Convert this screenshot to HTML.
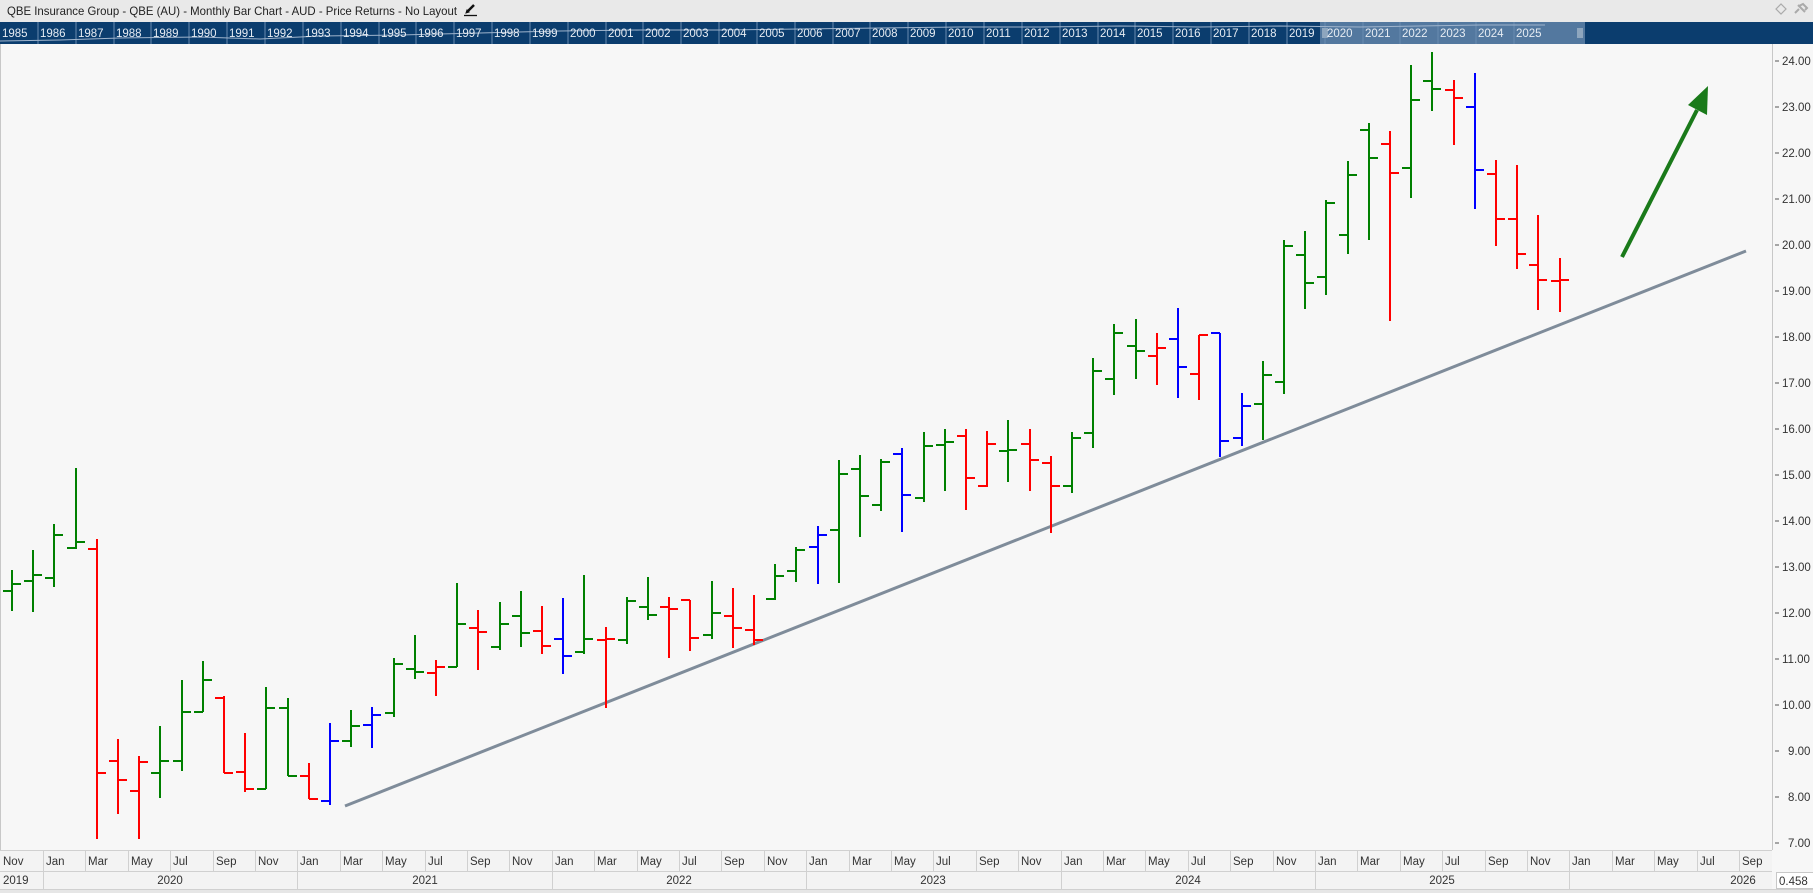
<!DOCTYPE html>
<html><head><meta charset="utf-8"><style>
html,body{margin:0;padding:0;width:1813px;height:893px;overflow:hidden;background:#f7f7f7;font-family:"Liberation Sans",sans-serif}
svg{display:block}
</style></head><body>
<svg width="1813" height="893" xmlns="http://www.w3.org/2000/svg" font-family="Liberation Sans, sans-serif">
<rect x="0" y="0" width="1813" height="893" fill="#f7f7f7"/>
<rect x="0" y="0" width="1813" height="22" fill="#e9e9e9"/>
<text x="7" y="15" font-size="12" fill="#222" textLength="450" lengthAdjust="spacingAndGlyphs">QBE Insurance Group - QBE (AU) - Monthly Bar Chart - AUD - Price Returns - No Layout</text>
<g stroke="#111" fill="none"><path d="M467 12 L474 5" stroke-width="2.5"/><path d="M464 15.5 H477" stroke-width="1.3"/><path d="M466 13 L467 10 L469 12 Z" fill="#111" stroke-width="1"/></g>
<path d="M1776 9 L1781 4 L1786 9 L1781 14 Z" fill="none" stroke="#aaa" stroke-width="1.2"/>
<path d="M1795 13 L1799 9 M1798 5 L1805 12 M1799 6 L1803 4 L1807 8 L1805 10" fill="none" stroke="#aaa" stroke-width="2"/>
<rect x="0" y="22" width="1813" height="22" fill="#0b3d6e"/>
<rect x="1320" y="22" width="265" height="22" fill="#53789f"/>
<g stroke="#6a8bb0" stroke-width="1">
<path d="M38 22V44M76 22V44M114 22V44M151 22V44M189 22V44M227 22V44M265 22V44M303 22V44M341 22V44M379 22V44M416 22V44M454 22V44M492 22V44M530 22V44M568 22V44M606 22V44M643 22V44M681 22V44M719 22V44M757 22V44M795 22V44M833 22V44M870 22V44M908 22V44M946 22V44M984 22V44M1022 22V44M1060 22V44M1098 22V44M1135 22V44M1173 22V44M1211 22V44M1249 22V44M1287 22V44M1325 22V44M1363 22V44M1400 22V44M1438 22V44M1476 22V44M1514 22V44"/>
</g>
<polyline points="0,41 60,40 120,38 200,37 260,39 320,36 400,35 480,33 560,31 640,30 720,30 800,29 880,28 960,27 1040,27 1120,26 1200,27 1280,26 1360,27 1420,26 1480,25 1545,25" fill="none" stroke="#9fb4cc" stroke-width="1"/>
<g stroke="#c9d3de" stroke-width="1"><path d="M1323 28V38M1325 28V38M1327 28V38M1578 28V38M1580 28V38M1582 28V38"/></g>
<g font-size="11.5" fill="#e6ecf3">
<text x="2" y="37">1985</text><text x="40" y="37">1986</text><text x="78" y="37">1987</text><text x="116" y="37">1988</text><text x="153" y="37">1989</text><text x="191" y="37">1990</text><text x="229" y="37">1991</text><text x="267" y="37">1992</text><text x="305" y="37">1993</text><text x="343" y="37">1994</text><text x="381" y="37">1995</text><text x="418" y="37">1996</text><text x="456" y="37">1997</text><text x="494" y="37">1998</text><text x="532" y="37">1999</text><text x="570" y="37">2000</text><text x="608" y="37">2001</text><text x="645" y="37">2002</text><text x="683" y="37">2003</text><text x="721" y="37">2004</text><text x="759" y="37">2005</text><text x="797" y="37">2006</text><text x="835" y="37">2007</text><text x="872" y="37">2008</text><text x="910" y="37">2009</text><text x="948" y="37">2010</text><text x="986" y="37">2011</text><text x="1024" y="37">2012</text><text x="1062" y="37">2013</text><text x="1100" y="37">2014</text><text x="1137" y="37">2015</text><text x="1175" y="37">2016</text><text x="1213" y="37">2017</text><text x="1251" y="37">2018</text><text x="1289" y="37">2019</text><text x="1327" y="37">2020</text><text x="1365" y="37">2021</text><text x="1402" y="37">2022</text><text x="1440" y="37">2023</text><text x="1478" y="37">2024</text><text x="1516" y="37">2025</text>
</g>
<line x1="0.5" y1="44" x2="0.5" y2="850" stroke="#c8c8c8"/>
<line x1="1772.5" y1="44" x2="1772.5" y2="850" stroke="#c8c8c8"/>
<line x1="345" y1="806" x2="1746" y2="251" stroke="#7f8c9a" stroke-width="3"/>
<line x1="1622" y1="257" x2="1697" y2="110" stroke="#1a7a1a" stroke-width="4"/>
<path d="M1708 86 L1707 115 L1688 105 Z" fill="#1a7a1a"/>
<g stroke-width="2" fill="none" shape-rendering="crispEdges">
<path stroke="#008000" d="
M12 570V611M3 591H12M12 584H21
M33 550V612M24 581H33M33 575H42
M54 524V587M45 578H54M54 535H63
M76 468V549M67 548H76M76 542H85
M160 726V798M151 773H160M160 761H169
M182 680V771M173 761H182M182 712H191
M203 661V712M194 712H203M203 680H212
M266 687V789M257 789H266M266 708H275
M288 698V776M279 708H288M288 776H297
M351 710V747M342 741H351M351 726H360
M394 658V717M385 713H394M394 664H403
M415 635V679M406 669H415M415 672H424
M457 583V667M448 667H457M457 624H466
M500 602V650M491 647H500M500 624H509
M521 591V647M512 616H521M521 633H530
M584 575V654M575 652H584M584 639H593
M627 597V644M618 640H627M627 601H636
M648 577V620M639 607H648M648 615H657
M712 581V639M703 635H712M712 613H721
M775 564V600M766 599H775M775 576H784
M796 547V582M787 571H796M796 550H805
M839 460V583M830 530H839M839 474H848
M860 455V537M851 469H860M860 496H869
M881 459V511M872 505H881M881 462H890
M924 432V502M915 498H924M924 446H933
M945 429V491M936 445H945M945 442H954
M1008 420V482M999 451H1008M1008 450H1017
M1072 432V493M1063 486H1072M1072 438H1081
M1093 358V448M1084 433H1093M1093 371H1102
M1114 324V395M1105 379H1114M1114 333H1123
M1136 319V379M1127 346H1136M1136 351H1145
M1263 361V440M1254 404H1263M1263 375H1272
M1284 240V394M1275 382H1284M1284 246H1293
M1305 231V309M1296 255H1305M1305 283H1314
M1326 200V295M1317 277H1326M1326 203H1335
M1348 161V254M1339 235H1348M1348 175H1357
M1369 123V240M1360 130H1369M1369 158H1378
M1411 65V198M1402 168H1411M1411 100H1420
M1432 52V111M1423 81H1432M1432 89H1441"/>
<path stroke="#ff0000" d="
M97 539V839M88 549H97M97 773H106
M118 739V814M109 761H118M118 780H127
M139 756V839M130 791H139M139 762H148
M224 696V773M215 698H224M224 773H233
M245 733V792M236 772H245M245 789H254
M309 763V799M300 776H309M309 799H318
M436 660V696M427 673H436M436 667H445
M478 610V670M469 628H478M478 632H487
M542 606V654M533 631H542M542 646H551
M606 627V708M597 640H606M606 639H615
M669 597V658M660 607H669M669 609H678
M690 600V651M681 600H690M690 638H699
M733 588V648M724 616H733M733 628H742
M754 595V645M745 630H754M754 640H763
M966 429V510M957 436H966M966 478H975
M987 431V487M978 486H987M987 444H996
M1030 429V491M1021 444H1030M1030 460H1039
M1051 456V533M1042 463H1051M1051 486H1060
M1157 333V385M1148 356H1157M1157 348H1166
M1199 335V400M1190 374H1199M1199 335H1208
M1390 131V321M1381 144H1390M1390 173H1399
M1454 80V145M1445 90H1454M1454 98H1463
M1496 160V246M1487 174H1496M1496 219H1505
M1517 165V269M1508 219H1517M1517 254H1526
M1538 215V310M1529 265H1538M1538 280H1547
M1560 258V312M1551 281H1560M1560 280H1569"/>
<path stroke="#0000ff" d="
M330 723V805M321 801H330M330 741H339
M372 707V748M363 725H372M372 715H381
M563 598V674M554 639H563M563 656H572
M818 526V584M809 547H818M818 535H827
M902 448V532M893 454H902M902 495H911
M1178 308V398M1169 339H1178M1178 367H1187
M1220 333V457M1211 333H1220M1220 441H1229
M1242 393V446M1233 438H1242M1242 406H1251
M1475 73V209M1466 107H1475M1475 170H1484"/>
</g>
<g stroke="#555" stroke-width="1"><path d="M1775 61H1779M1775 107H1779M1775 153H1779M1775 199H1779M1775 245H1779M1775 291H1779M1775 337H1779M1775 383H1779M1775 429H1779M1775 475H1779M1775 521H1779M1775 567H1779M1775 613H1779M1775 659H1779M1775 705H1779M1775 751H1779M1775 797H1779M1775 843H1779"/></g>
<g font-size="11.5" fill="#333">
<text x="1782" y="65">24.00</text><text x="1782" y="111">23.00</text><text x="1782" y="157">22.00</text><text x="1782" y="203">21.00</text><text x="1782" y="249">20.00</text><text x="1782" y="295">19.00</text><text x="1782" y="341">18.00</text><text x="1782" y="387">17.00</text><text x="1782" y="433">16.00</text><text x="1782" y="479">15.00</text><text x="1782" y="525">14.00</text><text x="1782" y="571">13.00</text><text x="1782" y="617">12.00</text><text x="1782" y="663">11.00</text><text x="1782" y="709">10.00</text><text x="1788" y="755">9.00</text><text x="1788" y="801">8.00</text><text x="1788" y="847">7.00</text>
</g>
<rect x="0" y="850" width="1772" height="40" fill="#f3f3f3"/>
<rect x="0" y="889" width="1813" height="4" fill="#e6e6e6"/>
<g stroke="#d0d0d0" stroke-width="1">
<path d="M0 850.5H1772M0 871.5H1772M0 889.5H1813"/>
<path d="M43.5 850V871M85.5 850V871M128.5 850V871M170.5 850V871M213.5 850V871M255.5 850V871M297.5 850V871M340.5 850V871M382.5 850V871M425.5 850V871M467.5 850V871M509.5 850V871M552.5 850V871M594.5 850V871M637.5 850V871M679.5 850V871M721.5 850V871M764.5 850V871M806.5 850V871M849.5 850V871M891.5 850V871M933.5 850V871M976.5 850V871M1018.5 850V871M1061.5 850V871M1103.5 850V871M1145.5 850V871M1188.5 850V871M1230.5 850V871M1273.5 850V871M1315.5 850V871M1357.5 850V871M1400.5 850V871M1442.5 850V871M1485.5 850V871M1527.5 850V871M1569.5 850V871M1612.5 850V871M1654.5 850V871M1697.5 850V871M1739.5 850V871"/>
<path d="M43.5 871V889M297.5 871V889M552.5 871V889M806.5 871V889M1061.5 871V889M1315.5 871V889M1569.5 871V889"/>
</g>
<g font-size="11.5" fill="#333">
<text x="3" y="865">Nov</text><text x="46" y="865">Jan</text><text x="88" y="865">Mar</text><text x="131" y="865">May</text><text x="173" y="865">Jul</text><text x="216" y="865">Sep</text><text x="258" y="865">Nov</text>
<text x="300" y="865">Jan</text><text x="343" y="865">Mar</text><text x="385" y="865">May</text><text x="428" y="865">Jul</text><text x="470" y="865">Sep</text><text x="512" y="865">Nov</text>
<text x="555" y="865">Jan</text><text x="597" y="865">Mar</text><text x="640" y="865">May</text><text x="682" y="865">Jul</text><text x="724" y="865">Sep</text><text x="767" y="865">Nov</text>
<text x="809" y="865">Jan</text><text x="852" y="865">Mar</text><text x="894" y="865">May</text><text x="936" y="865">Jul</text><text x="979" y="865">Sep</text><text x="1021" y="865">Nov</text>
<text x="1064" y="865">Jan</text><text x="1106" y="865">Mar</text><text x="1148" y="865">May</text><text x="1191" y="865">Jul</text><text x="1233" y="865">Sep</text><text x="1276" y="865">Nov</text>
<text x="1318" y="865">Jan</text><text x="1360" y="865">Mar</text><text x="1403" y="865">May</text><text x="1445" y="865">Jul</text><text x="1488" y="865">Sep</text><text x="1530" y="865">Nov</text>
<text x="1572" y="865">Jan</text><text x="1615" y="865">Mar</text><text x="1657" y="865">May</text><text x="1700" y="865">Jul</text><text x="1742" y="865">Sep</text>
<text x="3" y="884">2019</text>
<text x="170" y="884" text-anchor="middle">2020</text><text x="425" y="884" text-anchor="middle">2021</text><text x="679" y="884" text-anchor="middle">2022</text><text x="933" y="884" text-anchor="middle">2023</text><text x="1188" y="884" text-anchor="middle">2024</text><text x="1442" y="884" text-anchor="middle">2025</text><text x="1743" y="884" text-anchor="middle">2026</text>
</g>
<rect x="1776.5" y="872.5" width="40" height="16" fill="#fff" stroke="#c8c8c8"/>
<text x="1779" y="885" font-size="11.5" fill="#333">0.458</text>
</svg>
</body></html>
